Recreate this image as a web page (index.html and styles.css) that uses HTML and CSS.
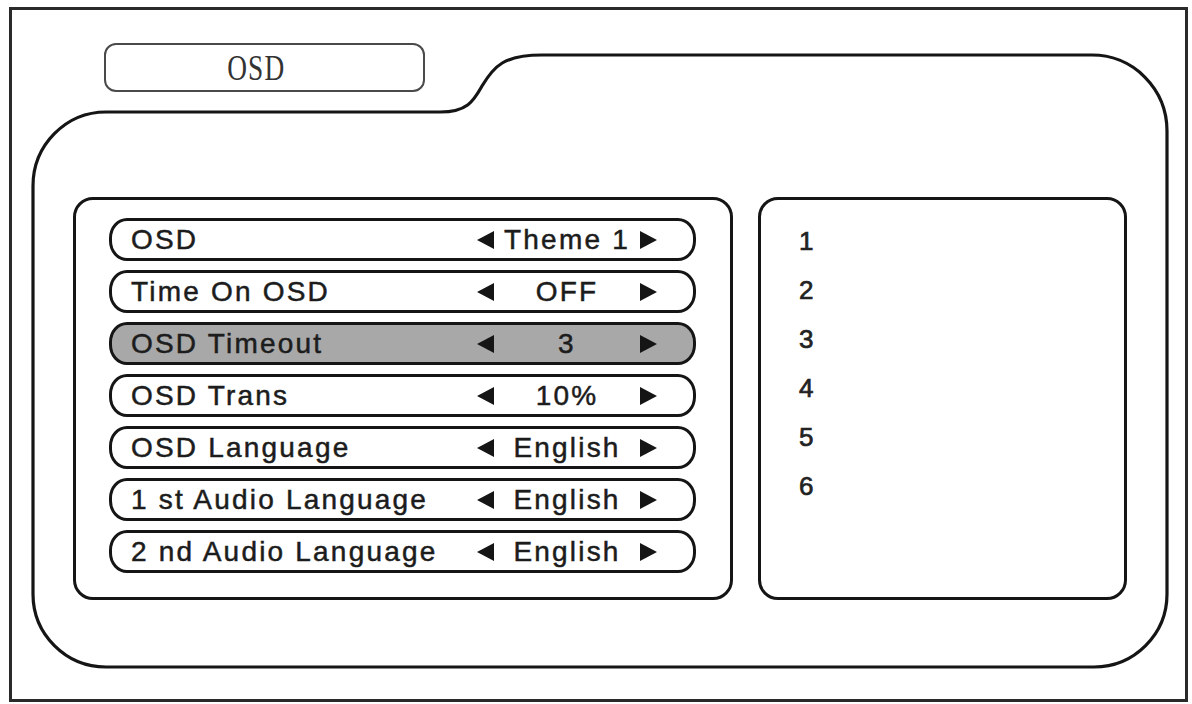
FILE: index.html
```html
<!DOCTYPE html>
<html lang="en">
<head>
  <meta charset="UTF-8">
  <title>OSD Setup</title>
  <link rel="stylesheet" href="styles.css">
</head>
<body>
  <div class="screen">
    <!-- folder outline drawn behind the menu -->
    <svg class="folder" viewBox="12 10 1173 689" width="1173" height="689">
      <path d="M33,186 A73,74 0 0 1 106,112 L440,112
               C468,112 474,100 482,86 C494,66 504,55 542,55
               L1092,55 A75,76 0 0 1 1167,131 L1167,594
               A73,73 0 0 1 1094,667 L106,667 A73,73 0 0 1 33,594 Z"
            fill="none" stroke="#151515" stroke-width="3.2"/>
    </svg>

    <div class="tab"><span>OSD</span></div>

    <div class="panels">
      <div class="menu">
        <div class="row">
          <span class="label">OSD</span>
          <span class="arrow left"></span>
          <span class="value">Theme 1</span>
          <span class="arrow right"></span>
        </div>
        <div class="row">
          <span class="label">Time On OSD</span>
          <span class="arrow left"></span>
          <span class="value">OFF</span>
          <span class="arrow right"></span>
        </div>
        <div class="row active">
          <span class="label">OSD Timeout</span>
          <span class="arrow left"></span>
          <span class="value">3</span>
          <span class="arrow right"></span>
        </div>
        <div class="row">
          <span class="label">OSD Trans</span>
          <span class="arrow left"></span>
          <span class="value">10%</span>
          <span class="arrow right"></span>
        </div>
        <div class="row">
          <span class="label">OSD Language</span>
          <span class="arrow left"></span>
          <span class="value">English</span>
          <span class="arrow right"></span>
        </div>
        <div class="row">
          <span class="label">1 st Audio Language</span>
          <span class="arrow left"></span>
          <span class="value">English</span>
          <span class="arrow right"></span>
        </div>
        <div class="row">
          <span class="label">2 nd Audio Language</span>
          <span class="arrow left"></span>
          <span class="value">English</span>
          <span class="arrow right"></span>
        </div>
      </div>

      <div class="options">
        <div class="option">1</div>
        <div class="option">2</div>
        <div class="option">3</div>
        <div class="option">4</div>
        <div class="option">5</div>
        <div class="option">6</div>
      </div>
    </div>
  </div>
</body>
</html>
```

FILE: styles.css
```css
/* Reset */
body {
  margin: 0;
  padding: 0;
  background: #fff;
  font-family: 'Liberation Sans', Arial, sans-serif;
  color: #1c1c1c;
}

/* Outer screen frame */
.screen {
  position: relative;
  box-sizing: border-box;
  width: 1179px;
  height: 695px;
  margin: 7px 0 0 9px;
  border: 3px solid #2a2a2a;
  display: flex;
  flex-direction: column;
}

.folder {
  position: absolute;
  left: 0;
  top: 0;
}

/* Title tab */
.tab {
  position: relative;
  box-sizing: border-box;
  width: 321px;
  height: 49px;
  margin: 33px 0 0 92px;
  border: 2px solid #4a4a4a;
  border-radius: 12px;
  display: flex;
  justify-content: center;
  align-items: center;
  padding-right: 16px;
}

.tab span {
  font-family: 'Liberation Serif', 'Times New Roman', serif;
  font-size: 36px;
  color: #333;
  transform: scaleX(0.76);
  letter-spacing: 1.5px;
}

/* Two panels */
.panels {
  position: relative;
  display: flex;
  gap: 25px;
  margin: 105px 0 0 61px;
}

.menu, .options {
  box-sizing: border-box;
  height: 403px;
  border: 3px solid #151515;
  border-radius: 20px;
}

.menu {
  width: 660px;
  padding: 18px 0 0 33px;
  display: flex;
  flex-direction: column;
  gap: 9px;
}

.row {
  box-sizing: border-box;
  width: 587px;
  height: 43px;
  border: 3px solid #151515;
  border-radius: 18px / 20px;
  display: flex;
  align-items: center;
  padding: 0 36px 0 19px;
  font-size: 28px;
  letter-spacing: 2.2px;
  -webkit-text-stroke: 0.5px #1c1c1c;
}

.row.active {
  background: #a8a8a8;
}

.label {
  flex: 1;
  white-space: nowrap;
}

.value {
  width: 146px;
  text-align: center;
  white-space: nowrap;
  letter-spacing: 2.2px;
}

.arrow {
  width: 0;
  height: 0;
  border-top: 9px solid transparent;
  border-bottom: 9px solid transparent;
}

.arrow.left {
  border-right: 17px solid #151515;
}

.arrow.right {
  border-left: 17px solid #151515;
}

/* Number list */
.options {
  width: 369px;
  padding: 17px 0 0 38px;
}

.option {
  height: 49px;
  line-height: 49px;
  font-size: 26px;
  color: #222;
  -webkit-text-stroke: 0.7px #222;
}
```
